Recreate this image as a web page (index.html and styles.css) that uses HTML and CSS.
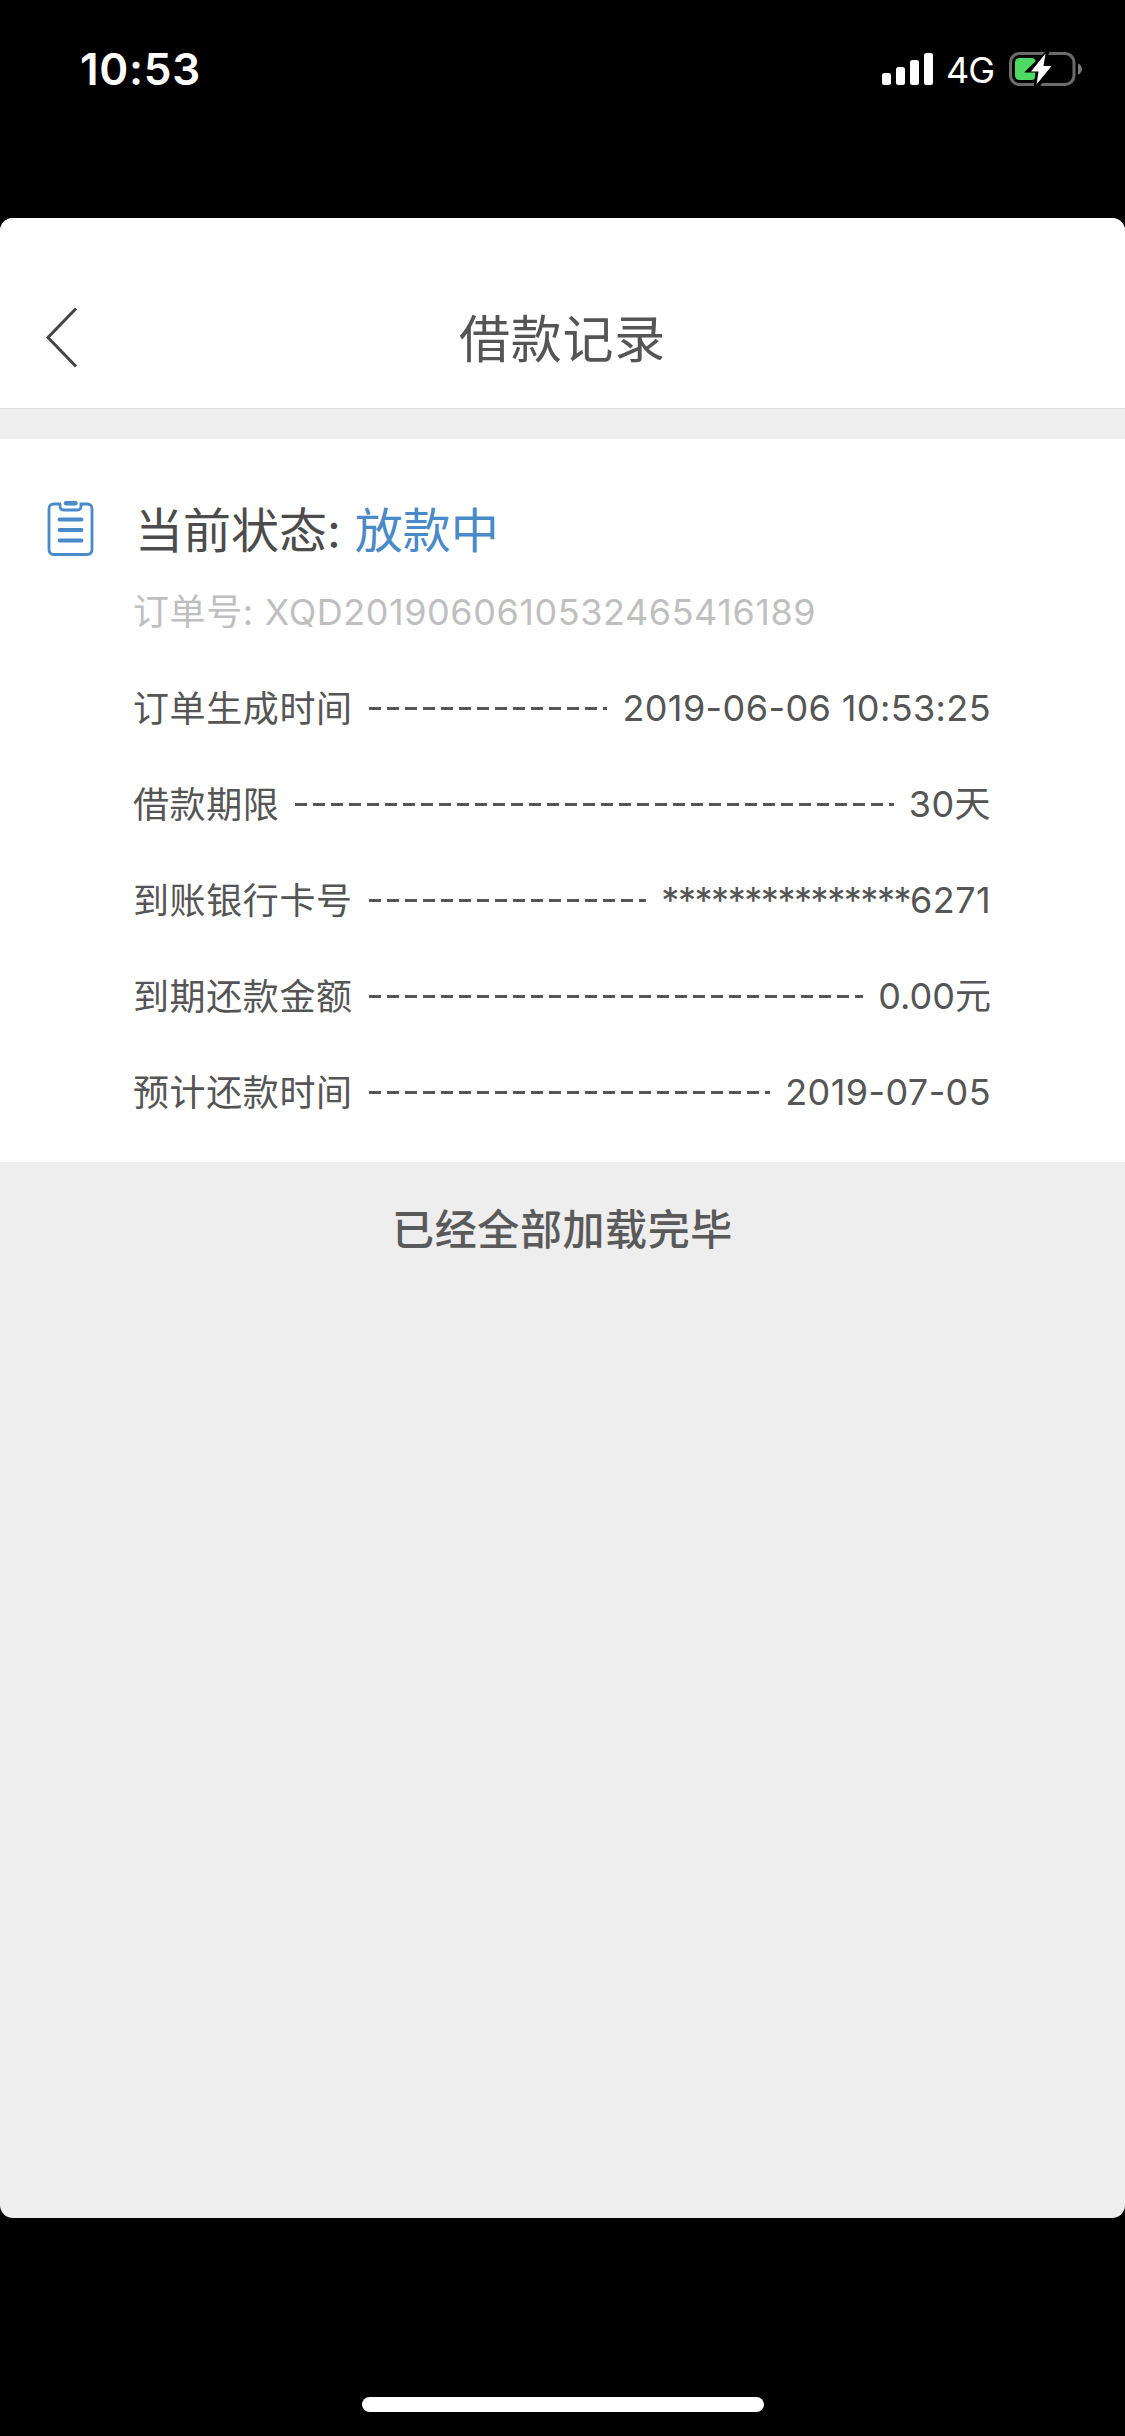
FILE: index.html
```html
<!DOCTYPE html>
<html lang="zh-CN">
<head>
  <meta charset="UTF-8" />
  <meta name="viewport" content="width=device-width, initial-scale=1.0" />
  <title>借款记录</title>
  <link rel="stylesheet" href="styles.css">
</head>
<body>
  <div class="status-bar">
    <div class="time">10:53</div>
    <div class="status-icons">
      <svg class="signal" width="52" height="34" viewBox="0 0 52 34" fill="#fff">
        <rect x="0" y="20" width="9" height="12" rx="2.5" />
        <rect x="14" y="14" width="9" height="18" rx="2.5" />
        <rect x="28" y="7" width="9" height="25" rx="2.5" />
        <rect x="42" y="0" width="9" height="32" rx="2.5" />
      </svg>
      <span class="network">4G</span>
      <svg class="battery" width="74" height="34" viewBox="0 0 74 34">
        <rect x="1.5" y="1.5" width="63.5" height="31" rx="9" fill="none" stroke="#6b6b6b" stroke-width="3" />
        <path d="M69 11.5c5.2 1.5 5.2 9.500 0 11z" fill="#7a7a7a" />
        <rect x="6" y="6" width="21" height="22" rx="4.500" fill="#4cd964" />
        <path d="M37.500 0L17.500 19.500H27.500L26 34H30L43.500 14H33.500L39.500 0z" fill="#000" stroke="#000" stroke-width="2" />
        <path d="M36.500 1.500L22 19.500H29.500L27.500 32.500L42.500 14H34.500z" fill="#fff" />
      </svg>
    </div>
  </div>

  <div class="page">
    <header>
      <svg class="back" width="36" height="64" viewBox="0 0 36 64">
        <path d="M31 2.500L3 31.500L31 60.500" fill="none" stroke="#444" stroke-width="3" />
      </svg>
      <div class="title">借款记录</div>
    </header>

    <main class="record">
      <div class="state">
        <svg class="clipboard" width="48" height="56" viewBox="0 0 48 56" fill="none" stroke="#4a8ac8">
          <path d="M14 3H7Q2 3 2 8V48.500Q2 53.500 7 53.500H40Q45 53.500 45 48.500V8Q45 3 40 3H34V5Q34 9 30 9H17Q13 9 13 5V3" stroke-width="2.800" />
          <path d="M19 2.200H28.500" stroke-width="4.400" stroke-linecap="round" />
          <path d="M12.500 18.500H34.500M12.500 29H34.500M12.500 39.500H34.500" stroke-width="3.800" stroke-linecap="round" />
        </svg>
        <div class="state-text">当前状态:<span class="blue">放款中</span></div>
      </div>
      <div class="order"><span class="cn">订单号:</span><span class="order-no">XQD2019060610532465416189</span></div>
      <ul>
        <li><span class="cn">订单生成时间</span><i></i><span class="num">2019-06-06 10:53:25</span></li>
        <li><span class="cn">借款期限</span><i></i><span class="num">30天</span></li>
        <li><span class="cn">到账银行卡号</span><i></i><span class="num"><span class="stars">***************</span>6271</span></li>
        <li><span class="cn">到期还款金额</span><i></i><span class="num money">0.00元</span></li>
        <li><span class="cn">预计还款时间</span><i></i><span class="num">2019-07-05</span></li>
      </ul>
    </main>

    <div class="loaded">已经全部加载完毕</div>
  </div>

  <div class="home-bar"></div>
</body>
</html>
```

FILE: styles.css
```css
* { box-sizing: border-box; }
body {
  margin: 0;
  height: 2436px;
  display: flex;
  flex-direction: column;
  background: #000;
  color: #555;
  font-family: Inter, "Noto Sans CJK SC", sans-serif;
  font-size: 36px;
  overflow: hidden;
}
.status-bar {
  height: 218px;
  padding: 36px 42px 0 80px;
  display: flex;
  justify-content: space-between;
  align-items: flex-start;
  color: #fff;
}
.time {
  font-size: 44px;
  font-weight: 600;
  line-height: 66px;
  letter-spacing: 0.7px;
}
.status-icons {
  display: flex;
  align-items: center;
  height: 66px;
}
.signal { margin-top: 1px; }
.network {
  width: 48px;
  margin: 1px 15px 0 12px;
  letter-spacing: -1px;
}
.page {
  height: 2000px;
  background: #eee;
  border-radius: 13px;
  overflow: hidden;
}
header {
  height: 191px;
  padding: 50px 43px 0 45px;
  display: flex;
  align-items: center;
  background: #fff;
  border-bottom: 1px solid #e0e0e0;
}
.title {
  flex: 1;
  margin: -5px 38px 0 0;
  text-align: center;
  font-size: 51px;
  letter-spacing: 0.7px;
}
.record {
  height: 723px;
  margin-top: 30px;
  padding: 43px 134px 0 47px;
  background: #fff;
}
.state {
  display: flex;
  align-items: center;
  height: 94px;
}
.state-text {
  margin: -4px 0 0 40px;
  font-size: 48px;
  color: #4c4c4c;
}
.blue {
  margin-left: 14px;
  color: #4a8ac8;
}
.order {
  height: 84px;
  margin-left: 86px;
  line-height: 72px;
  color: #bfbfbf;
}
.order-no {
  margin-left: 11px;
  letter-spacing: 0.55px;
}
ul {
  list-style: none;
  margin: 0 0 0 86px;
  padding: 0;
}
li {
  display: flex;
  align-items: center;
  height: 96px;
  line-height: 96px;
  white-space: nowrap;
}
.cn { letter-spacing: 0.6px; }
li .cn { padding-top: 1px; }
.num { letter-spacing: 0.4px; }
.money { letter-spacing: 0; }
.stars { letter-spacing: -1.45px; }
/* 虚线 */
li i {
  flex: 1;
  height: 3px;
  margin: 0 15px 0 16px;
  background: repeating-linear-gradient(to right, #555 0, #555 12px, transparent 12px, transparent 18px);
}
.loaded {
  padding-top: 35px;
  text-align: center;
  color: #5a5a5a;
  font-size: 42px;
  font-weight: 500;
  line-height: 66px;
  letter-spacing: 0.6px;
}
.home-bar {
  width: 402px;
  height: 15px;
  margin: 179px auto 0;
  border-radius: 8px;
  background: #fff;
}
```
